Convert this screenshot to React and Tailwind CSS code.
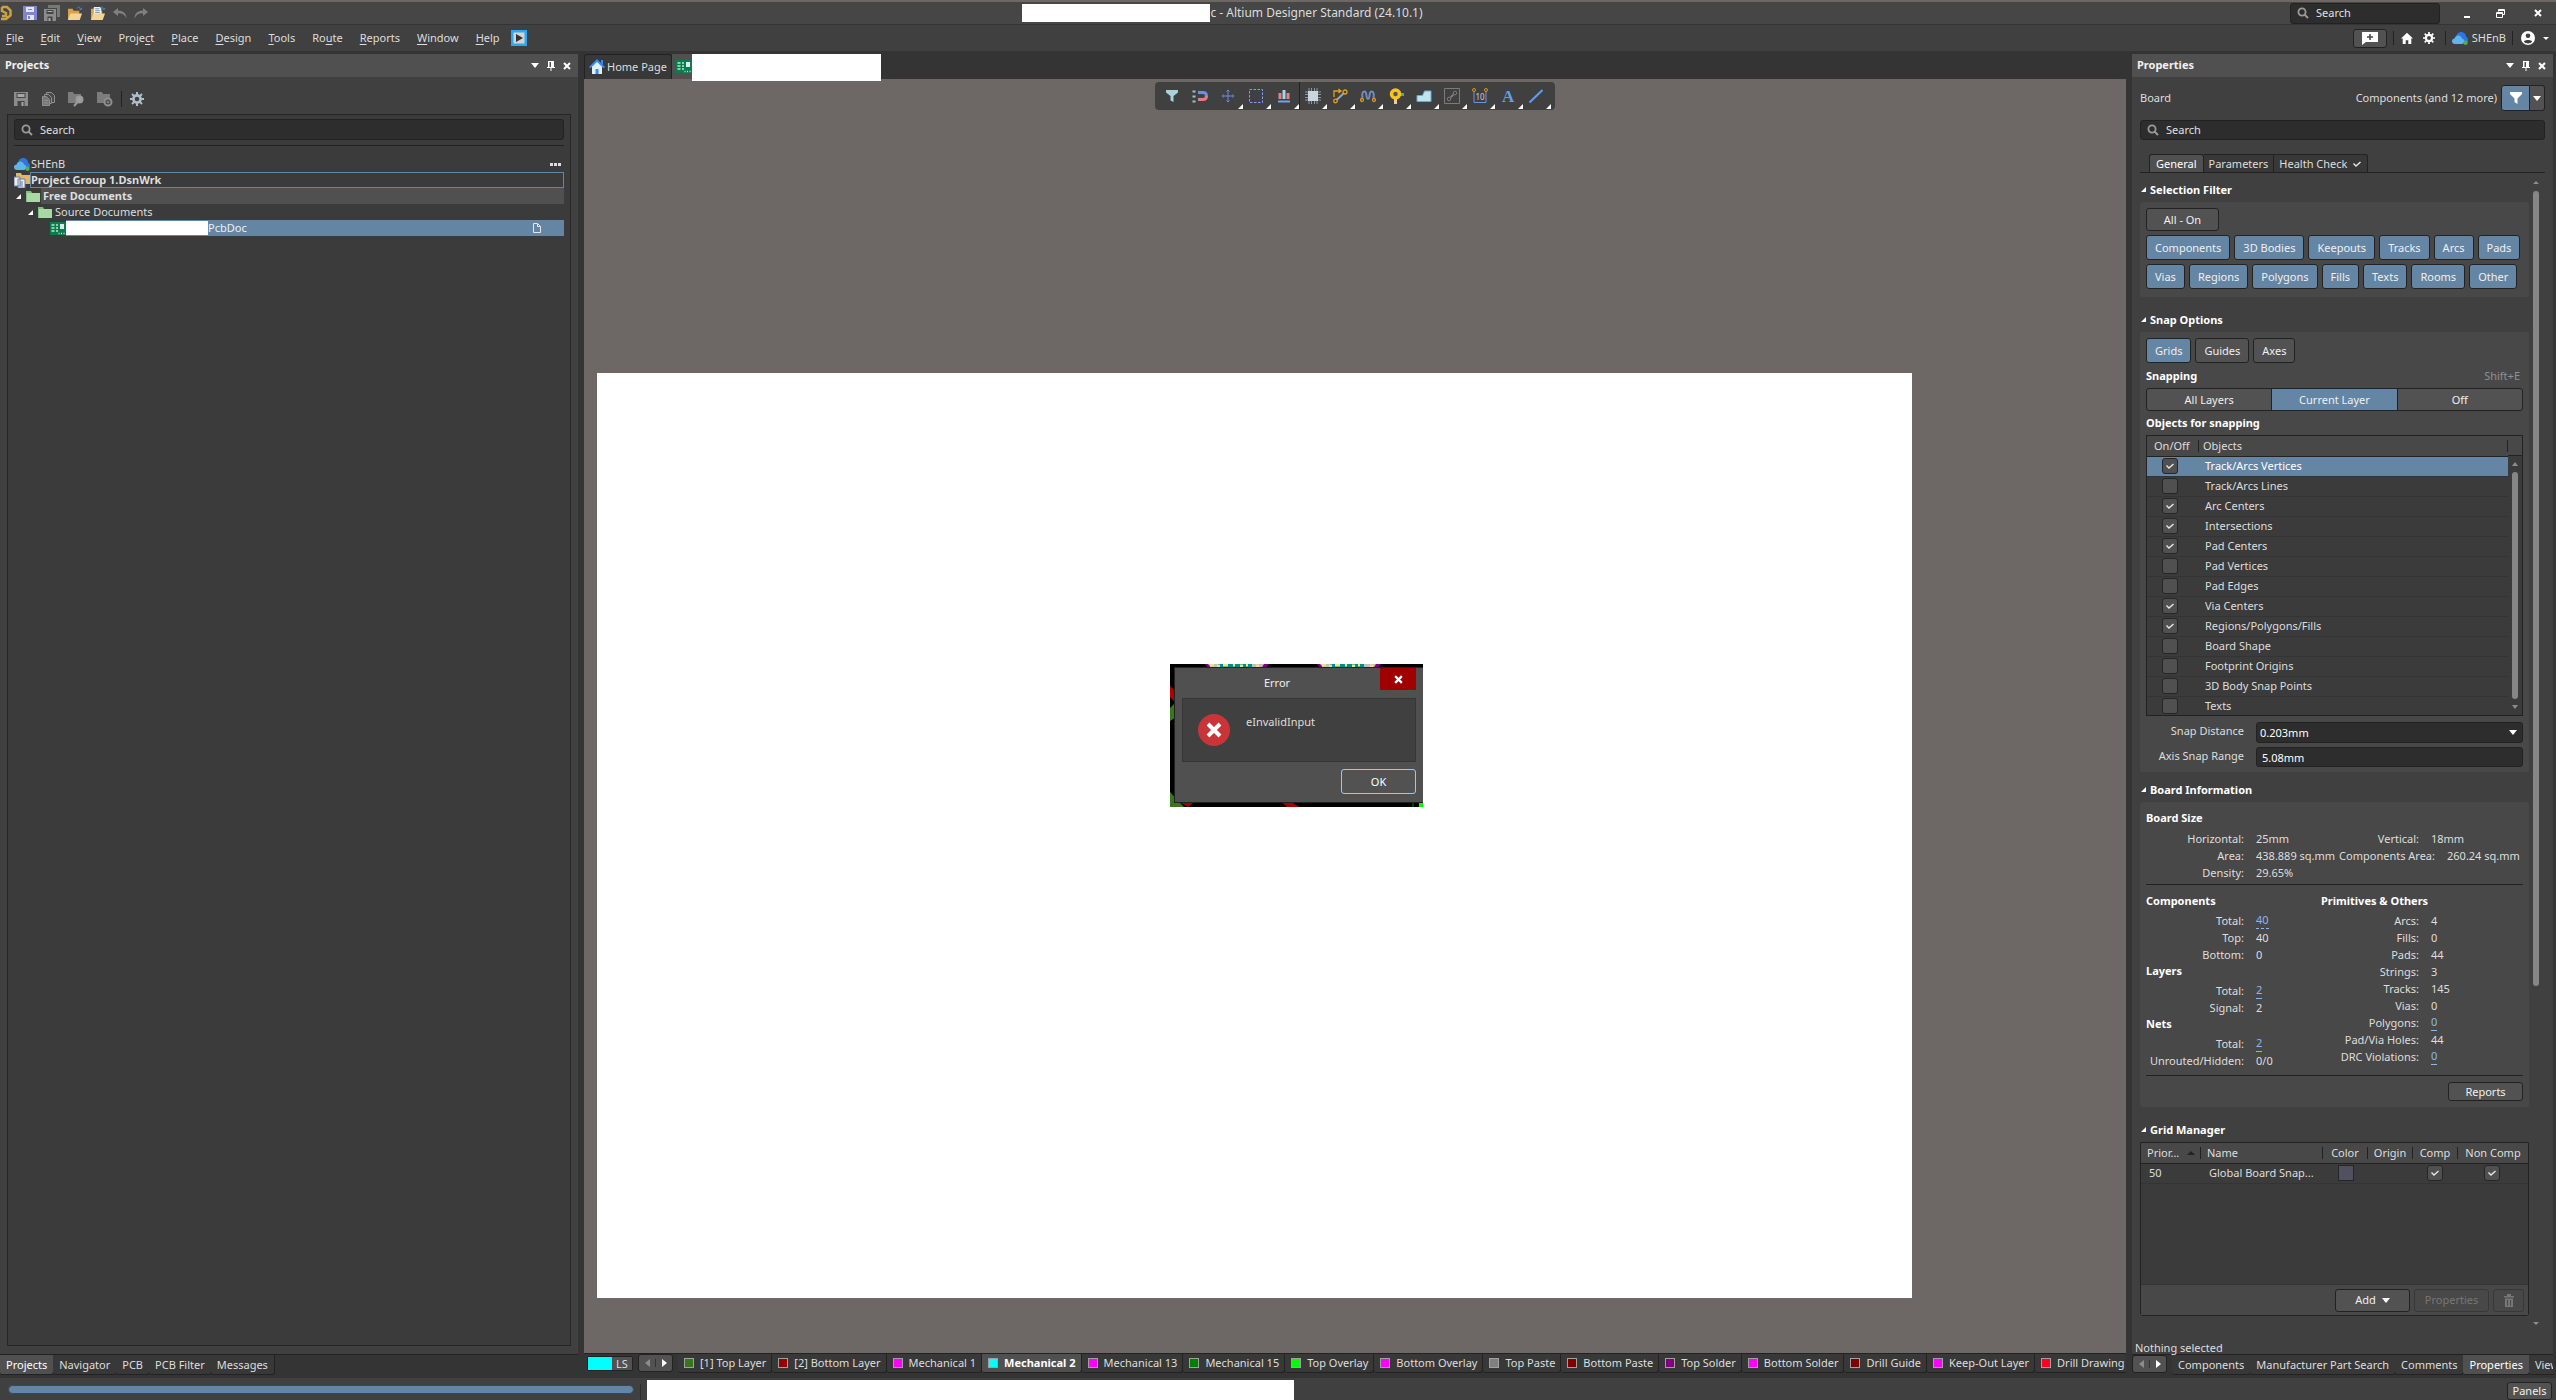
import React, { useState } from "react";

const menus = [
  ["", "F", "ile"],
  ["", "E", "dit"],
  ["", "V", "iew"],
  ["Proje", "c", "t"],
  ["", "P", "lace"],
  ["", "D", "esign"],
  ["", "T", "ools"],
  ["Ro", "u", "te"],
  ["", "R", "eports"],
  ["", "W", "indow"],
  ["", "H", "elp"],
];

const layers = [
  { name: "[1] Top Layer", color: "#38761d" },
  { name: "[2] Bottom Layer", color: "#980000" },
  { name: "Mechanical 1", color: "#ff00ff" },
  { name: "Mechanical 2", color: "#00ffff" },
  { name: "Mechanical 13", color: "#ff00ff" },
  { name: "Mechanical 15", color: "#008000" },
  { name: "Top Overlay", color: "#00ff00" },
  { name: "Bottom Overlay", color: "#ff00ff" },
  { name: "Top Paste", color: "#808080" },
  { name: "Bottom Paste", color: "#800000" },
  { name: "Top Solder", color: "#800080" },
  { name: "Bottom Solder", color: "#ff00ff" },
  { name: "Drill Guide", color: "#800000" },
  { name: "Keep-Out Layer", color: "#ff00ff" },
  { name: "Drill Drawing", color: "#ff0022" },
];

const snapObjects = [
  ["Track/Arcs Vertices", true],
  ["Track/Arcs Lines", false],
  ["Arc Centers", true],
  ["Intersections", true],
  ["Pad Centers", true],
  ["Pad Vertices", false],
  ["Pad Edges", false],
  ["Via Centers", true],
  ["Regions/Polygons/Fills", true],
  ["Board Shape", false],
  ["Footprint Origins", false],
  ["3D Body Snap Points", false],
  ["Texts", false],
];

/* ---------- icons ---------- */

const Caret = ({ className = "" }) => (
  <svg viewBox="0 0 8 5" className={`w-2 h-[5px] shrink-0 fill-white ${className}`}>
    <path d="M0 0h8L4 5z" />
  </svg>
);

const Pin = () => (
  <svg viewBox="0 0 8 10" className="w-2 h-[10px] fill-white">
    <path d="M1 0h6v6h1v1H4.500v3h-1V7H0V6h1zM2.500 1v5H4V1z" fillRule="evenodd" />
  </svg>
);

const Cross = ({ className = "w-2 h-2" }) => (
  <svg viewBox="0 0 8 8" className={className}>
    <path d="M1 1l6 6M7 1L1 7" stroke="#fff" strokeWidth="2" />
  </svg>
);

const Magnifier = () => (
  <svg viewBox="0 0 12 12" className="w-3 h-3 shrink-0">
    <circle cx="5" cy="5" r="3.600" fill="none" stroke="#9a9a9a" strokeWidth="1.800" />
    <path d="M7.600 7.600l3.400 3.400" stroke="#9a9a9a" strokeWidth="2" />
  </svg>
);

const Cloud = () => (
  <svg viewBox="0 0 16 14" className="w-4 h-[14px] shrink-0">
    <path d="M4 7C4 3 6.500 1 9 1s5 1.500 5 4.500c1.300.8 2 2 2 3.500 0 2-1.500 3-3 3H6z" fill="#2f74e0" />
    <path d="M3 13c-1.800 0-3-1.200-3-2.800S1.200 7.600 2.600 7.500C3 5.600 4.500 4.500 6.300 4.500c2 0 3.500 1.300 3.800 3.200C11.700 8 12.500 9 12.500 10.300S11.500 13 10 13z" fill="#5eb6ea" />
    <circle cx="13.500" cy="11.800" r="2.200" fill="#4caf50" />
  </svg>
);

const Gear = ({ color = "#fff", className = "w-3 h-3" }) => (
  <svg viewBox="0 0 14 14" className={className} fill="none" stroke={color}>
    <circle cx="7" cy="7" r="3.600" strokeWidth="2.600" />
    <path d="M7 0v2.500M7 11.500V14M0 7h2.500M11.500 7H14M2 2l1.900 1.900M10.100 10.100L12 12M12 2l-1.900 1.900M3.900 10.100L2 12" strokeWidth="2" />
  </svg>
);

const Home = () => (
  <svg viewBox="0 0 14 14" className="w-3 h-3 fill-white">
    <path d="M7 1l7 6.500h-2V14H8.500V9.500h-3V14H2V7.500H0z" />
  </svg>
);

const HomeColor = () => (
  <svg viewBox="0 0 16 16" className="w-4 h-4 shrink-0">
    <path d="M3 7l5-5 5 5v8H3z" fill="#e8eef6" />
    <path d="M8 0l8 8-1.500 1.300L8 3 1.500 9.300 0 8z" fill="#2f8fff" />
    <path d="M12 1h2v5l-2-2zM6.500 10h3v5h-3z" fill="#2f8fff" />
  </svg>
);

const Funnel = ({ color = "#fff" }) => (
  <svg viewBox="0 0 12 12" className="w-3 h-3">
    <path d="M0 0h12v2L7.500 6.500V12l-3-2V6.500L0 2z" fill={color} />
  </svg>
);

const Floppy = ({ color = "#7f86cf" }) => (
  <svg viewBox="0 0 14 14" className="w-[14px] h-[14px] shrink-0">
    <path d="M0 0h14v14H0z" fill={color} />
    <path d="M3 1h8v5H3zM4 9h7v5H4z" fill="#e6e6f2" />
    <path d="M5 3h4v1H5zM5 10h2v3H5z" fill={color} />
  </svg>
);

const FloppyGray = () => (
  <svg viewBox="0 0 14 14" className="w-[14px] h-[14px] shrink-0">
    <path d="M0 0h14v14H0z" fill="#8c8c8c" />
    <path d="M2.500 1h9v5h-9zM3.500 9h7v5h-7z" fill="#454545" />
    <path d="M3.500 2h7v3h-7zM7.500 10h2v4h-2z" fill="#a6a6a6" />
  </svg>
);

const FloppyMany = () => (
  <svg viewBox="0 0 16 16" className="w-4 h-4 shrink-0">
    <path d="M4 0h12v12h-3V3H4z" fill="#787878" />
    <path d="M0 4h12v12H0z" fill="#8c8c8c" />
    <path d="M2.500 5h7v4h-7zM3.500 11.500h5V16h-5z" fill="#444" />
    <path d="M3.500 6h5v1h-5zM4.500 13h2v3h-2z" fill="#aaa" />
  </svg>
);

const FolderOpen = ({ doc }) => (
  <svg viewBox="0 0 17 16" className="w-4 h-[15px] shrink-0">
    <path d="M1 3h5l1 2h6v10H1z" fill="#d9a14d" />
    {doc && <path d="M4 1h7l1 1v8H4z" fill="#eef3f8" />}
    {doc && <path d="M5.500 3h4M5.500 5h5M5.500 7h5" stroke="#6d93b5" />}
    <path d="M3.500 8H16l-2.500 7H1z" fill="#f4d493" />
    <path d="M10.500 2.500C12 .5 14 .8 15 3.500M13 3l2 1 1-2" fill="none" stroke="#4d88b8" />
  </svg>
);

const Arrow = ({ flip }) => (
  <svg viewBox="0 0 14 12" className={`w-[14px] h-3 shrink-0 ${flip ? "-scale-x-100" : ""}`}>
    <path d="M5 1L0 5l5 4V6.200C9 6 12 7.500 13.500 11.500 13.500 6.500 10 3.600 5 3.600z" fill="#808080" />
  </svg>
);

const CopyDocs = () => (
  <svg viewBox="0 0 14 14" className="w-[14px] h-[14px]" fill="#4a4a4a" stroke="#8f8f8f">
    <path d="M5.500.5h5l3 3v7h-8z" />
    <path d="M3.500 2.500h4l3 3v6h-7z" />
    <path d="M1.500 4.500h4l3 3v6h-7zM3 8.500h4M3 11h4" fill="#777" />
  </svg>
);

const FolderTool = ({ gear }) => (
  <svg viewBox="0 0 16 15" className="w-4 h-[15px]">
    <path d="M0 0h5l1 2h7v9H0z" fill="#7c7c7c" />
    {gear ? (
      <g fill="#444" stroke="#8f8f8f" strokeWidth="2">
        <circle cx="11" cy="10" r="3.500" />
        <circle cx="11" cy="10" r="1" strokeWidth="1" />
      </g>
    ) : (
      <g stroke="#9a9a9a" strokeWidth="2">
        <circle cx="11.500" cy="7.500" r="3" fill="#a0a0a0" />
        <path d="M9.500 10L6 14" />
      </g>
    )}
  </svg>
);

const FolderGreen = () => (
  <svg viewBox="0 0 14 12" className="w-[14px] h-3 shrink-0">
    <path d="M0 1h5l1 2h8v9H0z" fill="#7fbf83" />
    <path d="M1 3h13v9H1z" fill="#a9d8a4" />
  </svg>
);

const GroupIcon = () => (
  <svg viewBox="0 0 16 15" className="w-4 h-[15px] shrink-0">
    <path d="M2 0h5l1 2h8v9H2z" fill="#e4b568" />
    <path d="M0 4h6v9H0zM4 6h7v9H4z" fill="#e9eef5" stroke="#6c7f9c" />
    <path d="M6 9h3M6 11h3M6 13h3" stroke="#5d7fae" />
  </svg>
);

const Pcb = () => (
  <svg viewBox="0 0 16 13" className="w-4 h-[13px] shrink-0">
    <path d="M0 0h16v13H0z" fill="#0c7c4e" />
    <path d="M10 2h4v5h-4z" fill="#dfe9ee" />
    <path d="M1.500 3h3M1.500 6h3M1.500 9h3M6 3h2M6 6h2M6 9h2M8.500 11.500h1M11 11.500h1M13.500 11.500h1" stroke="#b9e6cf" strokeWidth="1.500" />
  </svg>
);

const PageIcon = () => (
  <svg viewBox="0 0 8 10" className="w-2 h-[10px] mr-[23px] ml-auto" fill="none" stroke="#e6e6e6">
    <path d="M.5.5h4l3 3v6h-7zM4.500.5v3h3" />
  </svg>
);

const Triangle = () => (
  <svg viewBox="0 0 5 5" className="w-[5px] h-[5px] shrink-0 fill-white">
    <path d="M5 0v5H0z" />
  </svg>
);

const Tick = ({ className = "" }) => (
  <svg viewBox="0 0 10 8" className={`w-[10px] h-2 ${className}`} fill="none" stroke="#e6e6e6" strokeWidth="1.400">
    <path d="M1.500 3.500L4 6l4.500-4" />
  </svg>
);

const canvasTools = [
  ["Filter", false, <path d="M2 2h12v2.500L9.500 8v6l-3-1.500V8L2 4.500z" fill="#a9d3dc" />],
  ["Magnet", false, <g fill="none" strokeWidth="3"><path d="M6 4.500h5c2 0 3.500 1.200 3.500 3.500" stroke="#6f8fd8" /><path d="M14.500 8c0 2.300-1.500 3.500-3.500 3.500H6" stroke="#e07b80" /><path d="M2 2.500v12" stroke="#9fc0c8" strokeDasharray="2 3" /></g>],
  ["Move", true, <path d="M8 2v12M2 8h12M6.500 3.500L8 2l1.500 1.500M6.500 12.500L8 14l1.500-1.500M3.500 6.500L2 8l1.500 1.500M12.500 6.500L14 8l-1.500 1.500" fill="none" stroke="#6c8ce0" />],
  ["Select", true, <path d="M1.500 1.500h13v13h-13z" fill="none" stroke="#7ea0f0" strokeDasharray="2.500 1.500" />],
  ["Align", true, <g><path d="M2.500 5h3v6h-3zM10.500 5h3v6h-3z" fill="#e0848b" /><path d="M6.500 2h3v9h-3z" fill="#a6d6ea" /><path d="M2 13.500h12" stroke="#6fa3e8" strokeWidth="2" /></g>],
  ["Component", true, <g><path d="M4 0v16M6.500 0v16M9.500 0v16M12 0v16M0 4h16M0 6.500h16M0 9.500h16M0 12h16" stroke="#8a97a0" /><path d="M3 3h10v10H3z" fill="#c9d6df" /></g>],
  ["Route", true, <g fill="none" stroke="#e3a01c" strokeWidth="1.300"><path d="M2 9V3h6M6.500 1L9 3 6.500 5" /><path d="M4.500 12L12 5" stroke="#8ba7c4" strokeWidth="2" /><circle cx="3.500" cy="13" r="1.800" /><circle cx="13" cy="4" r="2" /></g>],
  ["Tune", true, <g fill="none" strokeWidth="2"><path d="M2.500 10.500C1.500 5 3 3.500 4.500 3.500c3 0 1 7.500 3.500 7.500s.5-7.500 3.500-7.500c1.500 0 3 1.500 2 7" stroke="#6f8cc0" /><circle cx="2" cy="12" r="1.500" stroke="#d9961c" strokeWidth="1.300" /><circle cx="14" cy="12" r="1.500" stroke="#d9961c" strokeWidth="1.300" /></g>],
  ["Via", true, <g><path d="M9 5h7v3H9z" fill="#5bb53c" /><path d="M6 9h3v7H6z" fill="#f0c9a0" /><circle cx="7.500" cy="6" r="4" fill="#555" stroke="#f5c518" strokeWidth="3.500" /></g>],
  ["Polygon", true, <path d="M1 7.500h5.500L8.500 3H15v10.500H1z" fill="#c0e3ec" stroke="#6aa9cc" />],
  ["Measure", true, <g fill="none" stroke="#7b7b7b"><path d="M.5.500h15v15H.5z" /><circle cx="5" cy="11" r="1.800" /><circle cx="11" cy="5" r="1.800" /><path d="M6.500 9.500l3-3" strokeWidth="2" /></g>],
  ["Dimension", true, <g fill="none"><path d="M2 3v11.500h12V3" stroke="#6f93d8" /><circle cx="2" cy="2" r="1.500" stroke="#d9961c" /><circle cx="14" cy="2" r="1.500" stroke="#d9961c" /><text x="3.500" y="12" fontSize="8" fill="#d0d0d0">10</text></g>],
  ["Text", true, <text x="2" y="14" fontSize="17" fontWeight="700" fontFamily="Liberation Serif, serif" fill="#5c9ff0">A</text>],
  ["Line", true, <path d="M1.500 14.500L14.500 2" stroke="#5c9ff0" strokeWidth="2" />],
];

/* ---------- small controls ---------- */

const PanelHeader = ({ title }) => (
  <div className="flex items-center h-[23px] bg-[#505050] pl-[5px] pr-[7px] gap-2">
    <h2 className="font-bold mr-auto pb-px text-[#f0f0f0]">{title}</h2>
    <button aria-label="Panel menu"><Caret /></button>
    <button aria-label="Pin"><Pin /></button>
    <button aria-label="Close panel"><Cross /></button>
  </div>
);

const SearchBox = ({ id, className = "" }) => (
  <label htmlFor={id} className={`flex items-center gap-[7px] bg-[#2d2d2d] border border-[#222] rounded-[3px] px-[6px] ${className}`}>
    <Magnifier />
    <input id={id} type="text" placeholder="Search" aria-label="Search" className="w-full min-w-0 bg-transparent outline-none placeholder:text-[#e0e0e0]" />
  </label>
);

const ToolButton = ({ on, className = "", children }) => (
  <button className={`border border-[#222] rounded-[3px] text-[#f0f0f0] ${on ? "bg-[#6485a4]" : "bg-[#525252]"} ${className}`}>
    {children}
  </button>
);

const CheckBox = ({ label, checked, onChange }) => (
  <span className="relative block w-4 h-4 mx-auto">
    <input
      type="checkbox"
      aria-label={label}
      checked={checked}
      onChange={onChange}
      className="peer appearance-none block w-4 h-4 rounded-[3px] border border-[#262626] bg-[#505050]"
    />
    <Tick className="absolute left-[3px] top-1 hidden peer-checked:block pointer-events-none" />
  </span>
);

const Section = ({ title, children }) => (
  <section>
    <h3 className="flex items-center gap-1 h-[17px] pl-px mb-1 font-bold text-white">
      <Triangle />
      {title}
    </h3>
    {children}
  </section>
);

const Arrows = () => (
  <div className="flex items-center shrink-0 h-[18px] w-[35px] border border-[#222] rounded-[3px] bg-[#525252] mr-[5px]">
    <button aria-label="Scroll left" className="flex-1 flex justify-center border-r border-[#333]">
      <svg viewBox="0 0 5 8" className="w-[5px] h-2 fill-[#8c8c8c]"><path d="M5 0v8L0 4z" /></svg>
    </button>
    <button aria-label="Scroll right" className="flex-1 flex justify-center">
      <svg viewBox="0 0 5 8" className="w-[5px] h-2 fill-white"><path d="M0 0v8l5-4z" /></svg>
    </button>
  </div>
);

const BottomTab = ({ active, children }) => (
  <button className={`h-5 pt-px px-[6px] -mr-px shrink-0 border-r border-b border-[#222] rounded-b-[3px] whitespace-nowrap ${active ? "bg-[#505050] text-white" : "bg-[#383838]"}`}>
    {children}
  </button>
);

const Info = ({ label, value, link, wide }) => (
  <div className="flex gap-3 leading-[17px] whitespace-nowrap">
    <dt className={`shrink-0 text-right ${wide ? "w-[114px]" : "w-[98px]"}`}>{label}:</dt>
    <dd>
      {link ? <a href="#report" className="block leading-4 text-[#8ab8ee] border-b border-dashed border-[#8ab8ee]">{value}</a> : value}
    </dd>
  </div>
);

/* ---------- top bars ---------- */

const TitleBar = () => (
  <header className="border-t-2 border-[#6d6866] bg-[#464646]">
    <div className="flex items-center h-[22px]">
      <div className="w-2/5 flex items-center gap-[7px]">
        <svg viewBox="0 0 12 16" className="w-3 h-4 mr-1" fill="none" stroke="#c9a244" strokeWidth="2.500">
          <path d="M2 2h5l3.500 3.500v5L6 14H1M2 2v4l4 2v3H2" />
        </svg>
        <Floppy />
        <FloppyMany />
        <FolderOpen />
        <FolderOpen doc />
        <Arrow />
        <Arrow flip />
      </div>
      <div className="w-[188px] h-[18px] bg-white" />
      <h1 className="text-xs text-[#dcdcdc]">c - Altium Designer Standard (24.10.1)</h1>
      <div className="ml-auto flex items-center">
        <SearchBox id="global-search" className="w-[150px] h-[21px] mr-6" />
        <button aria-label="Minimize" className="w-4 h-4 flex items-end"><span className="w-[6px] h-[2px] mb-[3px] bg-white" /></button>
        <button aria-label="Restore" className="ml-4 w-[18px]">
          <svg viewBox="0 0 9 9" className="w-[9px] h-[9px]" fill="none" stroke="#fff">
            <path d="M2.500 2.500v-2h6v5h-2M2.500 1.500h6M.5 3.500h6v5h-6zM.5 4.500h6" />
          </svg>
        </button>
        <button aria-label="Close" className="ml-5 mr-[14px]"><Cross /></button>
      </div>
    </div>
  </header>
);

const MenuBar = () => (
  <nav className="flex items-center h-[27px] bg-[#404040] border-t border-[#343434] pl-[6px] pr-[7px] gap-[17px]">
    {menus.map(([pre, key, post]) => (
      <button key={key + post}>
        {pre}
        <span className="underline underline-offset-2">{key}</span>
        {post}
      </button>
    ))}
    <button aria-label="Run" className="-ml-[6px]">
      <svg viewBox="0 0 16 16" className="w-4 h-4">
        <path d="M0 0h16v16H0z" fill="#2ba7f5" />
        <path d="M2.500 2.500h11v11h-11z" fill="#d4d4d4" />
        <path d="M5 4l7 4-7 4z" fill="#333" />
      </svg>
    </button>
    <div className="ml-auto flex items-center gap-[6px]">
      <ToolButton className="w-[34px] h-[19px] flex items-center justify-center">
        <svg viewBox="0 0 16 13" className="w-4 h-[13px]">
          <path d="M0 0h16v10H4l-4 3z" fill="#fff" />
          <path d="M8 2v6M5 5h6" stroke="#444" strokeWidth="1.500" />
        </svg>
      </ToolButton>
      <span className="w-px h-[14px] bg-[#222]" />
      <button aria-label="Home" className="ml-px"><Home /></button>
      <button aria-label="Settings" className="mx-1"><Gear /></button>
      <span className="w-px h-[14px] bg-[#222]" />
      <button className="flex items-center gap-1"><Cloud />SHEnB</button>
      <span className="w-px h-[14px] bg-[#222] mr-[2px]" />
      <button aria-label="Account" className="flex items-center gap-2">
        <svg viewBox="0 0 14 14" className="w-[14px] h-[14px]">
          <circle cx="7" cy="7" r="7" fill="#fff" />
          <circle cx="7" cy="4.800" r="2.300" fill="#404040" />
          <path d="M2.800 10.500C4 8.500 10 8.500 11.200 10.500 10 13 4 13 2.800 10.500z" fill="#404040" />
        </svg>
        <svg viewBox="0 0 6 3" className="w-[6px] h-[3px] fill-white"><path d="M0 0h6L3 3z" /></svg>
      </button>
    </div>
  </nav>
);

/* ---------- left panel ---------- */

const ProjectsPanel = () => (
  <aside className="w-[578px] shrink-0 flex flex-col">
    <PanelHeader title="Projects" />
    <div className="flex-1 flex flex-col bg-[#404040] px-[7px] pb-2 border-b border-[#222]">
      <div className="flex items-center h-[37px] pt-[7px] pl-[7px] gap-[13px]">
        <button aria-label="Save"><FloppyGray /></button>
        <button aria-label="Copy"><CopyDocs /></button>
        <button aria-label="Explore"><FolderTool /></button>
        <button aria-label="Project options"><FolderTool gear /></button>
        <span className="w-px h-4 -mx-[5px] bg-[#222]" />
        <button aria-label="Settings"><Gear color="#aebfca" className="w-[14px] h-[14px]" /></button>
      </div>
      <div className="flex-1 border border-[#262626] bg-[#3b3b3b] px-[6px] pt-1">
        <SearchBox id="project-search" className="h-[21px]" />
        <div className="border-b border-[#222] mt-[5px] mb-[10px]" />
        <ul>
          <li className="flex items-center h-4 gap-px">
            <Cloud />
            SHEnB
            <button aria-label="More" className="ml-auto mr-[3px] flex gap-px">
              <span className="w-[3px] h-[3px] bg-[#ddd]" />
              <span className="w-[3px] h-[3px] bg-[#ddd]" />
              <span className="w-[3px] h-[3px] bg-[#ddd]" />
            </button>
          </li>
          <li className="flex items-center h-4 font-bold">
            <GroupIcon />
            <span className="flex-1 h-4 leading-[14px] border border-[#6485a4]">Project Group 1.DsnWrk</span>
          </li>
          <li className="flex items-center h-4 pl-[2px] font-bold">
            <Triangle />
            <span className="w-[5px]" />
            <FolderGreen />
            <span className="flex-1 leading-4 pl-[2px] ml-px bg-[#505050]">Free Documents</span>
          </li>
          <li className="flex items-center h-4 pl-[14px]">
            <Triangle />
            <span className="w-[5px]" />
            <FolderGreen />
            <span className="pl-[3px]">Source Documents</span>
          </li>
          <li className="flex items-center h-4 pl-9">
            <Pcb />
            <span className="flex-1 flex items-center h-4 bg-[#6485a4] text-[#f0f0f0]">
              <span className="w-[142px] h-[14px] bg-white" />
              PcbDoc
              <PageIcon />
            </span>
          </li>
        </ul>
      </div>
    </div>
    <div className="flex h-[23px]">
      <BottomTab active>Projects</BottomTab>
      <BottomTab>Navigator</BottomTab>
      <BottomTab>PCB</BottomTab>
      <BottomTab>PCB Filter</BottomTab>
      <BottomTab>Messages</BottomTab>
    </div>
  </aside>
);

/* ---------- editor ---------- */

const ErrorDialog = () => (
  <div role="dialog" aria-label="Error" className="relative w-[253px] h-[143px] bg-black overflow-hidden">
    {/* board fragments behind the dialog frame */}
    <svg viewBox="0 0 253 143" className="absolute inset-0 w-full h-full">
      <path d="M35 0h64l-4 5H39z" fill="#800080" />
      <path d="M38 0h56l-3 5H42z" fill="#c0c0c0" />
      <path d="M48 0h34v5H48z" fill="#008f8f" />
      <path d="M40 1h4M47 2h3M53 1h5M63 1h2M70 2h3M76 1h2M86 2h3" stroke="#f0e08a" strokeWidth="3" />
      <path d="M147 0h64l-4 5h-56z" fill="#800080" />
      <path d="M150 0h56l-3 5h-49z" fill="#c0c0c0" />
      <path d="M160 0h34v5h-34z" fill="#008f8f" />
      <path d="M152 1h4M159 2h3M165 1h5M175 1h2M182 2h3M188 1h2M200 2h3" stroke="#f0e08a" strokeWidth="3" />
      <path d="M0 22l5 5v11l-5-5z" fill="#b00000" />
      <path d="M0 44l5-5v15l-5 3zM0 128l14 15H0z" fill="#38761d" />
      <path d="M11 139h12l-5 4zM110 137l10 0 9 6h-12z" fill="#a00000" />
      <path d="M249 138h4v5h-4z" fill="#00ff00" />
      <path d="M243 138v5" stroke="#008000" />
    </svg>
    <div className="relative mt-[3px] ml-1 h-[136px] bg-[#505050] border border-r-0 border-[#222] px-[7px]">
      <div className="flex items-start h-[30px]">
        <h2 className="flex-1 text-center pr-2 pt-[7px] text-[#f0f0f0]">Error</h2>
        <button aria-label="Close dialog" className="flex items-center justify-center w-9 h-[22px] bg-[#a00000]"><Cross className="w-[9px] h-[9px]" /></button>
      </div>
      <div className="flex items-center h-16 bg-[#404040] border border-[#363636] pl-[15px]">
        <svg viewBox="0 0 32 32" className="w-8 h-8">
          <circle cx="16" cy="16" r="16" fill="#c83437" />
          <path d="M10 10l12 12M22 10L10 22" stroke="#fff" strokeWidth="4" />
        </svg>
        <p className="pl-4 mb-4">eInvalidInput</p>
      </div>
      <button className="block ml-auto mt-[7px] w-[75px] h-[25px] rounded-[3px] border border-[#9cc8f0] bg-[#525252] text-white">OK</button>
    </div>
  </div>
);

const Editor = () => {
  const [layer, setLayer] = useState("Mechanical 2");
  return (
    <main className="flex-1 min-w-0 flex flex-col">
      <div className="flex h-[25px]">
        <button className="flex items-center gap-[2px] w-[88px] pl-1 border border-b-0 border-[#222] rounded-t-[3px] bg-[#383838] whitespace-nowrap">
          <HomeColor />
          Home Page
        </button>
        <button aria-label="Board document" className="flex items-center pl-1 w-5 overflow-hidden bg-[#505050]"><Pcb /></button>
        <div className="w-[189px] h-[27px] shrink-0 bg-white z-10" />
      </div>
      <div className="relative flex-1 flex flex-col bg-[#6d6866] pl-[13px] pr-[214px] pt-[294px] pb-[55px]">
        <div className="absolute top-[3px] left-1/2 -translate-x-1/2 flex h-7 px-1 rounded-[4px] bg-[#404040]">
          {canvasTools.map(([name, more, icon]) => (
            <button key={name} aria-label={name} className={`relative w-7 h-7 flex items-center justify-center pr-[2px] ${name === "Component" ? "border-l border-[#222]" : ""}`}>
              <svg viewBox="0 0 16 16" className="w-4 h-4 overflow-visible">{icon}</svg>
              {more && <span className="absolute right-0 bottom-px"><Triangle /></span>}
            </button>
          ))}
        </div>
        <div className="relative flex-1 bg-white">
          <div className="absolute left-[573px] top-[291px]"><ErrorDialog /></div>
        </div>
      </div>
      <div className="flex h-[25px] overflow-hidden border-t border-[#222]">
        <div className="flex h-[15px] mt-[2px] ml-[3px] mr-[5px] shrink-0 border border-[#222] rounded-[2px]">
          <span className="w-6 bg-[#00ffff]" />
          <button className="w-5 bg-[#525252] leading-[13px]">LS</button>
        </div>
        <Arrows />
        {layers.map(({ name, color }) => (
          <button
            key={name}
            onClick={() => setLayer(name)}
            className={`flex items-center h-[19px] gap-[6px] pl-[6px] pr-[5px] shrink-0 border-r border-b border-[#222] rounded-b-[3px] whitespace-nowrap ${
              layer === name ? "bg-[#505050] font-bold text-white" : "bg-[#383838]"
            }`}
          >
            <span className="w-[10px] h-[10px] border border-[#a0a0a0]" style={{ backgroundColor: color }} />
            {name}
          </button>
        ))}
      </div>
    </main>
  );
};

/* ---------- right panel ---------- */

const SnapTable = () => {
  const [items, setItems] = useState(snapObjects);
  const toggle = (i) => setItems(items.map(([n, on], j) => [n, i === j ? !on : on]));
  return (
    <div className="flex h-[281px] overflow-hidden border border-[#222] bg-[#3b3b3b]">
      <table className="flex-1 table-fixed border-collapse">
        <thead>
          <tr className="h-5 bg-[#484848] border-b border-[#222] text-left">
            <th className="w-[52px] p-0 pl-[7px] font-normal">
              <span className="block border-r border-[#222] leading-3">On/Off</span>
            </th>
            <th className="p-0 pl-1 font-normal">
              <span className="block w-[305px] border-r border-[#222] leading-3">Objects</span>
            </th>
          </tr>
        </thead>
        <tbody>
          {items.map(([name, on], i) => (
            <tr key={name} className={`h-5 border-b border-[#343434] ${i === 0 ? "bg-[#6485a4] text-white" : ""}`}>
              <td className="p-0 pr-[6px]"><CheckBox label={name} checked={on} onChange={() => toggle(i)} /></td>
              <td className="p-0 pl-[6px]">{name}</td>
            </tr>
          ))}
        </tbody>
      </table>
      <div className="w-[14px] flex flex-col items-center">
        <div className="w-full h-5 shrink-0 bg-[#484848] border-b border-[#222]" />
        <svg viewBox="0 0 6 4" className="w-[6px] h-1 mt-[6px] mb-[6px] fill-[#8c8c8c]"><path d="M3 0l3 4H0z" /></svg>
        <div className="flex-1 w-[6px] rounded-full bg-[#868686]" />
        <svg viewBox="0 0 6 4" className="w-[6px] h-1 my-[6px] fill-[#8c8c8c]"><path d="M0 0h6L3 4z" /></svg>
      </div>
    </div>
  );
};

const BoardInfo = () => (
  <div className="rounded-[3px] bg-[#484848] px-[6px] pt-2 pb-[6px] mb-[14px]">
    <h4 className="font-bold leading-4 text-white">Board Size</h4>
    <dl className="mt-1 pb-[3px] border-b border-[#222]">
      <div className="flex">
        <div className="w-[175px]"><Info label="Horizontal" value="25mm" /></div>
        <Info label="Vertical" value="18mm" />
      </div>
      <div className="flex">
        <div className="w-[175px]"><Info label="Area" value="438.889 sq.mm" /></div>
        <Info wide label="Components Area" value="260.24 sq.mm" />
      </div>
      <Info label="Density" value="29.65%" />
    </dl>
    <div className="flex pt-2 h-[191px] border-b border-[#222]">
      <div className="w-[175px]">
        <h4 className="font-bold leading-4 mb-[3px] text-white">Components</h4>
        <dl>
          <Info label="Total" value="40" link />
          <Info label="Top" value="40" />
          <Info label="Bottom" value="0" />
        </dl>
        <h4 className="font-bold leading-4 mb-[3px] text-white">Layers</h4>
        <dl>
          <Info label="Total" value="2" link />
          <Info label="Signal" value="2" />
        </dl>
        <h4 className="font-bold leading-4 mb-[3px] text-white">Nets</h4>
        <dl>
          <Info label="Total" value="2" link />
          <Info label="Unrouted/Hidden" value="0/0" />
        </dl>
      </div>
      <div>
        <h4 className="font-bold leading-4 mb-[3px] text-white">Primitives &amp; Others</h4>
        <dl>
          <Info label="Arcs" value="4" />
          <Info label="Fills" value="0" />
          <Info label="Pads" value="44" />
          <Info label="Strings" value="3" />
          <Info label="Tracks" value="145" />
          <Info label="Vias" value="0" />
          <Info label="Polygons" value="0" link />
          <Info label="Pad/Via Holes" value="44" />
          <Info label="DRC Violations" value="0" link />
        </dl>
      </div>
    </div>
    <ToolButton className="block w-[75px] h-[19px] mt-[6px] ml-auto leading-[17px]">Reports</ToolButton>
  </div>
);

const GridManager = () => {
  const [comp, setComp] = useState(true);
  const [nonComp, setNonComp] = useState(true);
  const th = "border-r border-[#222] leading-3";
  return (
    <div className="border border-[#222] rounded-b-[3px] bg-[#3b3b3b]">
      <table className="w-full table-fixed border-collapse">
        <thead>
          <tr className="h-5 bg-[#484848] border-b border-[#222]">
            <th className="w-[60px] p-0 pl-[6px] font-normal text-left">
              <span className={`${th} flex items-center gap-2`}>
                Prior...
                <svg viewBox="0 0 8 4" className="w-2 h-1 fill-[#222]"><path d="M4 0l4 4H0z" /></svg>
              </span>
            </th>
            <th className="w-[122px] p-0 pl-[6px] font-normal text-left"><span className={`block ${th}`}>Name</span></th>
            <th className="w-[45px] p-0 font-normal"><span className={`block ${th}`}>Color</span></th>
            <th className="w-[45px] p-0 font-normal"><span className={`block ${th}`}>Origin</span></th>
            <th className="w-[45px] p-0 font-normal"><span className={`block ${th}`}>Comp</span></th>
            <th className="p-0 font-normal"><span className="block leading-3">Non Comp</span></th>
          </tr>
        </thead>
        <tbody>
          <tr className="h-5 border-b border-[#343434]">
            <td className="p-0 pl-2">50</td>
            <td className="p-0 pl-2">Global Board Snap...</td>
            <td className="p-0"><span className="block w-4 h-4 mx-auto border border-[#262626] bg-[#505060]" /></td>
            <td className="p-0" />
            <td className="p-0 pr-[2px]"><CheckBox label="Comp" checked={comp} onChange={() => setComp(!comp)} /></td>
            <td className="p-0 pr-[2px]"><CheckBox label="Non Comp" checked={nonComp} onChange={() => setNonComp(!nonComp)} /></td>
          </tr>
        </tbody>
      </table>
      <div className="flex justify-end gap-1 mt-[100px] pt-1 pb-[3px] px-1 border-t border-[#343434] bg-[#484848]">
        <ToolButton className="flex items-center justify-center gap-[6px] w-[75px] h-[23px]">Add<Caret className="h-1" /></ToolButton>
        <button disabled className="w-[75px] h-[23px] border border-[#383838] rounded-[3px] text-[#777]">Properties</button>
        <button disabled aria-label="Delete" className="flex items-center justify-center w-[31px] h-[23px] border border-[#383838] rounded-[3px]">
          <svg viewBox="0 0 10 13" className="w-[10px] h-[13px] fill-[#777]">
            <path d="M3 0h4v2h3v1.500H0V2h3zM1 4.500h8V13H1zM3 6v5.500h1V6zm3 0v5.500h1V6z" fillRule="evenodd" />
          </svg>
        </button>
      </div>
    </div>
  );
};

const PropertiesPanel = () => {
  const filters = [
    ["Components", "3D Bodies", "Keepouts", "Tracks", "Arcs", "Pads"],
    ["Vias", "Regions", "Polygons", "Fills", "Texts", "Rooms", "Other"],
  ];
  return (
    <aside className="w-[421px] mr-[3px] shrink-0 flex flex-col">
      <PanelHeader title="Properties" />
      <div className="flex-1 flex flex-col bg-[#404040] border-b border-[#222]">
        <div className="pl-2 pr-2 pt-2">
          <div className="flex items-center h-[26px]">
            <span>Board</span>
            <span className="ml-auto mr-1">Components (and 12 more)</span>
            <button aria-label="Filter" className="flex items-center justify-center w-[29px] h-[26px] border border-[#222] rounded-l-[3px] bg-[#6485a4]"><Funnel /></button>
            <button aria-label="Filter options" className="flex items-center justify-center w-[15px] h-[26px] border border-l-0 border-[#222] rounded-r-[3px] bg-[#525252]"><Caret className="h-1" /></button>
          </div>
          <SearchBox id="prop-search" className="h-5 mt-[9px] mb-[14px]" />
          <div className="flex h-[19px] pl-[9px] border-b border-[#222]">
            <button className="px-[6px] border border-b-0 border-[#222] rounded-t-[3px] bg-[#505050] text-white">General</button>
            <button className="px-[5px] border-t border-r border-[#222] bg-[#383838]">Parameters</button>
            <button className="flex items-center gap-[5px] px-[5px] border-t border-r border-[#222] rounded-tr-[3px] bg-[#383838]">Health Check<Tick /></button>
          </div>
        </div>
        <div className="flex-1 flex pl-2">
          <div className="flex-1 pt-2">
            <Section title="Selection Filter">
              <div className="rounded-[3px] bg-[#484848] p-[6px] pb-2 mb-[14px]">
                <ToolButton className="block w-[73px] h-[23px]">All - On</ToolButton>
                {filters.map((row) => (
                  <div key={row[0]} className="flex gap-1 mt-1">
                    {row.map((name) => (
                      <ToolButton key={name} on className="px-2 h-[25px]">{name}</ToolButton>
                    ))}
                  </div>
                ))}
              </div>
            </Section>
            <Section title="Snap Options">
              <div className="rounded-[3px] bg-[#484848] p-[6px] pb-[5px] mb-[9px]">
                <div className="flex gap-1">
                  <ToolButton on className="px-2 h-[25px]">Grids</ToolButton>
                  <ToolButton className="px-2 h-[25px]">Guides</ToolButton>
                  <ToolButton className="px-2 h-[25px]">Axes</ToolButton>
                </div>
                <div className="flex justify-between h-[25px] items-center pr-[3px]">
                  <h4 className="font-bold text-white">Snapping</h4>
                  <span className="text-[#909090]">Shift+E</span>
                </div>
                <div className="flex h-[23px] border border-[#222] rounded-[3px] bg-[#525252] text-[#f0f0f0]">
                  <button className="flex-1">All Layers</button>
                  <button className="flex-1 bg-[#6485a4] border-x border-[#222]">Current Layer</button>
                  <button className="flex-1">Off</button>
                </div>
                <h4 className="font-bold text-white h-6 leading-6">Objects for snapping</h4>
                <SnapTable />
                <div className="flex items-start mt-[6px]">
                  <label htmlFor="snap-distance" className="w-[98px] mr-3 text-right leading-[18px]">Snap Distance</label>
                  <div className="relative flex-1">
                    <select id="snap-distance" className="block appearance-none w-full h-[21px] pl-[3px] bg-[#2d2d2d] border border-[#222] rounded-[3px] text-white">
                      <option>0.203mm</option>
                    </select>
                    <Caret className="absolute right-[6px] top-2 pointer-events-none" />
                  </div>
                </div>
                <div className="flex items-start mt-1">
                  <label htmlFor="axis-range" className="w-[98px] mr-3 text-right leading-[18px]">Axis Snap Range</label>
                  <input id="axis-range" defaultValue="5.08mm" className="flex-1 min-w-0 h-5 pl-[5px] bg-[#2d2d2d] border border-[#222] rounded-[3px] text-white" />
                </div>
              </div>
            </Section>
            <Section title="Board Information"><BoardInfo /></Section>
            <Section title="Grid Manager"><GridManager /></Section>
          </div>
          {/* scroll bar of the panel */}
          <div className="w-6 flex flex-col items-center pt-2 pl-[2px] pr-3">
            <svg viewBox="0 0 6 3" className="w-[6px] h-[3px] mb-[7px] fill-[#8c8c8c]"><path d="M3 0l3 3H0z" /></svg>
            <div className="w-[6px] h-[795px] rounded-full bg-[#868686]" />
            <svg viewBox="0 0 6 3" className="w-[6px] h-[3px] mt-auto mb-4 fill-[#8c8c8c]"><path d="M0 0h6L3 3z" /></svg>
          </div>
        </div>
        <p className="pl-[3px] leading-[13px]">Nothing selected</p>
      </div>
      <div className="flex h-[23px] overflow-hidden">
        <Arrows />
        <BottomTab>Components</BottomTab>
        <BottomTab>Manufacturer Part Search</BottomTab>
        <BottomTab>Comments</BottomTab>
        <BottomTab active>Properties</BottomTab>
        <BottomTab>View Configuration</BottomTab>
      </div>
    </aside>
  );
};

const App = () => {
  return (
    <div className="min-h-screen flex flex-col bg-[#343434] font-['Noto_Sans',sans-serif] text-[11px] leading-4 text-[#dedede] overflow-hidden">
      <TitleBar />
      <MenuBar />
      <div className="flex-1 flex gap-[6px] pt-[3px]">
        <ProjectsPanel />
        <Editor />
        <PropertiesPanel />
      </div>
      <footer className="flex items-end h-[22px] bg-[#404040]">
        <div className="w-[626px] h-[9px] ml-2 mb-[6px] rounded-full border border-[#2c4a66] bg-[#6485a4]" />
        <div className="w-px h-4 mx-[6px] bg-[#2c2c2c]" />
        <div className="w-[647px] h-5 bg-white" />
        <ToolButton className="ml-auto mr-1 w-[45px] h-[18px] leading-4">Panels</ToolButton>
      </footer>
    </div>
  );
};

export default App;
